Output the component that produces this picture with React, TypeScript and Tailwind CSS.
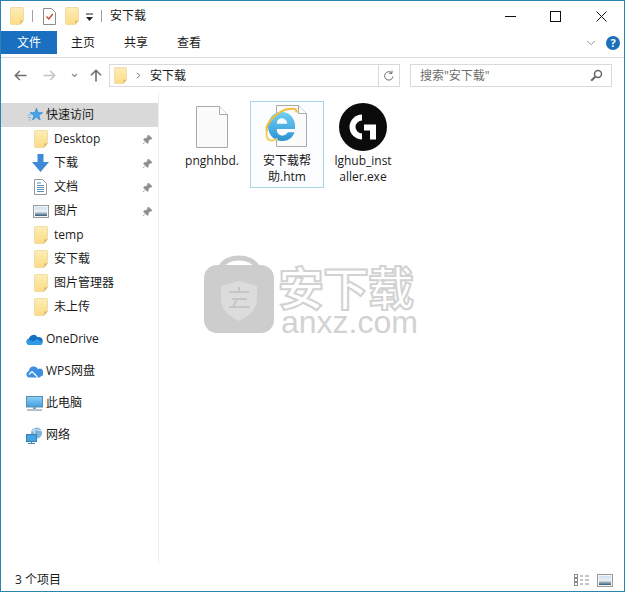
import React from "react";

const Folder = ({ w = 14, h = 18 }: { w?: number; h?: number }) => (
  <svg width={w} height={h} viewBox="0 0 14 18" className="shrink-0">
    <defs>
      <linearGradient id="fg" x1="0" y1="0" x2="0" y2="1">
        <stop offset="0" stopColor="#fcedb8" />
        <stop offset="1" stopColor="#fddc85" />
      </linearGradient>
    </defs>
    <path d="M1 .5h12l.5.5v12.500L10 17.500H1l-.5-.5V1z" fill="url(#fg)" stroke="#ecd59a" strokeWidth=".8" />
    <path d="M10.200 17.500v-4h3.300z" fill="#dcb968" />
  </svg>
);

const Pin = () => (
  <svg width="11" height="11" viewBox="0 0 11 11" className="shrink-0">
    <path d="M6.500 1 10 4.500 9 5.200 8.200 5 6.200 7l.1 1.600-.8.8-4-4 .8-.8L3.900 4.700l2-2-.2-.8zM3.200 7.600.8 10.200" fill="#8c8c8c" stroke="#8c8c8c" strokeWidth=".7" />
  </svg>
);

const StarIcon = () => (
  <svg width="16" height="16" viewBox="0 0 16 16">
    <path d="M9.500 1.200 11 5.600l4.600.1-3.700 2.800 1.300 4.500-3.800-2.700-3.900 2.700 1.400-4.500L3 5.700l4.700-.1z" fill="#45a4ea" stroke="#2f7fc4" strokeWidth=".6" />
    <path d="M.5 8h4M1 10.500h3M2 13h2" stroke="#6eb8ee" strokeWidth="1" />
  </svg>
);

const DownIcon = () => (
  <svg width="17" height="18" viewBox="0 0 17 18">
    <path d="M5.500 0h6v8H17l-8.500 10L0 8h5.500z" fill="#3d8ad8" />
  </svg>
);

const DocIcon = () => (
  <svg width="13" height="16" viewBox="0 0 13 16">
    <path d="M.5.500h8l4 4v11H.5z" fill="#fff" stroke="#9a9a9a" />
    <path d="M3 4h4M3 6.500h7M3 8.500h7M3 10.500h7M3 12.500h7" stroke="#5a8fb5" strokeWidth="1" />
  </svg>
);

const PicIcon = ({ w = 16, h = 13 }: { w?: number; h?: number }) => (
  <svg width={w} height={h} viewBox="0 0 16 13">
    <defs>
      <linearGradient id="pg" x1="0" y1="0" x2="0" y2="1">
        <stop offset="0" stopColor="#cfe2f2" />
        <stop offset=".5" stopColor="#e8eff5" />
        <stop offset="1" stopColor="#2e5a78" />
      </linearGradient>
    </defs>
    <rect x=".5" y=".5" width="15" height="12" fill="#f4f4f4" stroke="#9a9a9a" />
    <rect x="2" y="2" width="12" height="9" fill="url(#pg)" />
  </svg>
);

const OneDriveIcon = () => (
  <svg width="17" height="11" viewBox="0 0 17 11">
    <path d="M3.500 11A3.300 3.300 0 0 1 3 4.500 4.600 4.600 0 0 1 11.500 3.200 3.900 3.900 0 0 1 16.500 8 2.800 2.800 0 0 1 14 11z" fill="#1670bd" />
    <path d="M3.500 11a3 3 0 0 1-1-5.800L7 7.500l4-2.500 5.600 3.500A2.800 2.800 0 0 1 14 11z" fill="#2f9ae6" />
  </svg>
);

const WpsIcon = () => (
  <svg width="17" height="13" viewBox="0 0 17 13">
    <path d="M3.500 12.500A3.300 3.300 0 0 1 3 6a4.800 4.800 0 0 1 9-2 3.900 3.900 0 0 1 3 7.300q-.8 1.200-2 1.200z" fill="#3d8fe0" />
    <path d="M3 9.500 6 6.500l4 4 1.500 2" stroke="#fff" strokeWidth="1.200" fill="none" />
  </svg>
);

const PcIcon = () => (
  <svg width="17" height="15" viewBox="0 0 17 15">
    <defs>
      <linearGradient id="pc" x1="0" y1="0" x2="0" y2="1">
        <stop offset="0" stopColor="#8fd2f8" />
        <stop offset="1" stopColor="#3f9fe2" />
      </linearGradient>
    </defs>
    <rect x=".5" y=".5" width="16" height="10.500" fill="url(#pc)" stroke="#5a8fb0" />
    <path d="M7 11h3v2H7z" fill="#8aa0ae" />
    <path d="M1 14h15" stroke="#9aa7b0" strokeWidth="1.400" />
  </svg>
);

const NetIcon = () => (
  <svg width="17" height="17" viewBox="0 0 17 17">
    <circle cx="10.500" cy="6" r="5.500" fill="#7db4de" />
    <path d="M6 4q5-3 9 0M8 1q-1 5 3 10" stroke="#dbeaf5" fill="none" />
    <rect x=".5" y="7.500" width="10" height="7" fill="#43a3e6" stroke="#3b7fae" />
    <path d="M2 16.500h7M5.500 14.500v2" stroke="#4f88ad" />
  </svg>
);

const BlankFile = () => (
  <svg width="32" height="42" viewBox="0 0 32 42">
    <path d="M.5.500h23l8 8v33H.5z" fill="#fbfbfb" stroke="#a9a9a9" />
    <path d="M23.500.500v8h8" fill="#fff" stroke="#a9a9a9" />
  </svg>
);

const IeFile = () => (
  <svg width="44" height="44" viewBox="0 0 44 44">
    <defs>
      <linearGradient id="ie" x1="0" y1="0" x2="0" y2="1">
        <stop offset="0" stopColor="#6fd0f5" />
        <stop offset="1" stopColor="#2b93d2" />
      </linearGradient>
    </defs>
    <path d="M11.500 1.500h22l8 8v33h-30z" fill="#fbfbfb" stroke="#a9a9a9" />
    <path d="M33.500 1.500v8h8" fill="#fff" stroke="#a9a9a9" />
    <path fillRule="evenodd" d="M16.500 8a13.500 13.500 0 0 1 13.500 14.500v2.500H11.500c.2 4 2.500 6.500 6 6.500 2.500 0 4.300-1.200 5.300-3.200h6.700C27.700 34 23 37 17.300 37 9.500 37 3 31 3 22.500S9 8 16.500 8zM11.600 19.800h10.600c-.2-3.200-2.300-5.500-5.300-5.500s-5 2.300-5.300 5.500z" fill="url(#ie)" />
    <path d="M2 27C-1 20 14 6 24 5c5-.6 8-.5 7.500 3.500" stroke="#f2bd3a" strokeWidth="2.200" fill="none" />
    <path d="M2 26.500c-1.500 6 .5 10 4.500 10 2.500 0 4.500-1 6-2" stroke="#f4cf5a" strokeWidth="2" fill="none" />
  </svg>
);

const GLogo = () => (
  <svg width="48" height="48" viewBox="0 0 48 48">
    <circle cx="24" cy="24" r="24" fill="#0b0b0b" />
    <path d="M23 11.500a12.500 12.500 0 0 0 0 25v-6a6.500 6.500 0 0 1 0-13z" fill="#fff" />
    <path d="M25 21.500h12v15h-6v-9h-6z" fill="#fff" />
  </svg>
);

const SmallFolder = () => <Folder w={14} h={18} />;

const navTop: [React.ReactNode, string, boolean][] = [
  [<SmallFolder />, "Desktop", true],
  [<DownIcon />, "下载", true],
  [<DocIcon />, "文档", true],
  [<PicIcon />, "图片", true],
  [<SmallFolder />, "temp", false],
  [<SmallFolder />, "安下载", false],
  [<SmallFolder />, "图片管理器", false],
  [<SmallFolder />, "未上传", false],
];

const navBottom: [React.ReactNode, string][] = [
  [<OneDriveIcon />, "OneDrive"],
  [<WpsIcon />, "WPS网盘"],
  [<PcIcon />, "此电脑"],
  [<NetIcon />, "网络"],
];

const font = "font-['Open_Sans','Noto_Sans_CJK_SC',sans-serif]";

export default function App() {
  return (
    <div className={`relative w-[625px] h-[592px] bg-white border border-[#2a84ad] flex flex-col overflow-hidden text-[12px] text-[#1a1a1a] ${font}`}>
      {/* Title bar */}
      <div className="h-[30px] flex items-center shrink-0">
        <div className="ml-[9px] flex items-center">
          <Folder />
          <div className="ml-[8px] w-px h-[12px] bg-[#a0a0a0]" />
          <div className="ml-[10px]">
            <svg width="13" height="17" viewBox="0 0 13 17">
              <path d="M.5.500h8l4 4v12H.5z" fill="#fff" stroke="#8c8c8c" />
              <path d="M3.500 8.500 5.800 11l4-5" stroke="#c8432c" strokeWidth="1.300" fill="none" />
            </svg>
          </div>
          <div className="ml-[9px]"><Folder /></div>
          <svg width="9" height="9" viewBox="0 0 9 9" className="ml-[6px] mt-[2px]">
            <path d="M1 1h7" stroke="#222" />
            <path d="M1 4h7L4.500 8z" fill="#222" />
          </svg>
          <div className="ml-[7px] w-px h-[12px] bg-[#a0a0a0]" />
          <span className="ml-[8px] text-[12px]">安下载</span>
        </div>
        <div className="ml-auto flex items-center">
          <svg width="11" height="11" viewBox="0 0 11 11" className="mr-[34px]"><path d="M0 5.500h11" stroke="#111" /></svg>
          <svg width="11" height="11" viewBox="0 0 11 11" className="mr-[35px]"><rect x=".5" y=".5" width="10" height="10" fill="none" stroke="#111" /></svg>
          <svg width="11" height="11" viewBox="0 0 11 11" className="mr-[17px]"><path d="M.5.500l10 10M10.500.500l-10 10" stroke="#111" /></svg>
        </div>
      </div>

      {/* Ribbon tabs */}
      <div className="h-[27px] flex items-start shrink-0 border-b border-[#dadbdc]">
        <div className="w-[56px] h-[23px] bg-[#1a6fc0] text-white flex items-center justify-center">文件</div>
        <div className="w-[52px] h-[23px] flex items-center justify-center">主页</div>
        <div className="w-[54px] h-[23px] flex items-center justify-center">共享</div>
        <div className="w-[52px] h-[23px] flex items-center justify-center">查看</div>
        <div className="ml-auto flex items-center h-[23px] pr-[4px] gap-[10px]">
          <svg width="10" height="6" viewBox="0 0 10 6"><path d="M1 .8l4 4 4-4" stroke="#9a9a9a" fill="none" /></svg>
          <div className="w-[14px] h-[14px] rounded-full bg-[#1a6fb8] text-white flex items-center justify-center text-[11px] font-bold leading-none">?</div>
        </div>
      </div>

      {/* Address row */}
      <div className="h-[35px] flex items-center shrink-0">
        <svg width="13" height="11" viewBox="0 0 13 11" className="ml-[13px]"><path d="M12.500 5.500H1.500M5.800 1 1.300 5.500 5.800 10" stroke="#6e6e6e" strokeWidth="1.500" fill="none" /></svg>
        <svg width="13" height="11" viewBox="0 0 13 11" className="ml-[16px]"><path d="M.5 5.500h11M7.200 1l4.500 4.500L7.200 10" stroke="#c4c4c4" strokeWidth="1.500" fill="none" /></svg>
        <svg width="7" height="5" viewBox="0 0 7 5" className="ml-[15px]"><path d="M1 1l2.500 2.500L6 1" stroke="#8a8a8a" fill="none" strokeWidth="1.200" /></svg>
        <svg width="12" height="13" viewBox="0 0 12 13" className="ml-[12px]"><path d="M6 12.500V1.500M1 6.300l5-5 5 5" stroke="#6e6e6e" strokeWidth="1.600" fill="none" /></svg>
        <div className="ml-[7px] w-[291px] h-[23px] border border-[#d9d9d9] flex items-center">
          <div className="ml-[4px] flex"><Folder w={13} h={17} /></div>
          <svg width="5" height="7" viewBox="0 0 5 7" className="ml-[9px]"><path d="M1 .8l2.700 2.700L1 6.200" stroke="#6a6a6a" fill="none" /></svg>
          <span className="ml-[9px]">安下载</span>
          <div className="ml-auto w-px h-full bg-[#d9d9d9]" />
          <svg width="12" height="12" viewBox="0 0 12 12" className="mx-[4px]"><path d="M10 6.500A4.200 4.200 0 1 1 8.700 2.800M9 .6v2.800H6.200" stroke="#6a6a6a" fill="none" /></svg>
        </div>
        <div className="ml-[10px] w-[202px] h-[23px] border border-[#d9d9d9] flex items-center pl-[9px] pr-[8px] text-[#6d6d6d]">
          <span>搜索"安下载"</span>
          <svg width="13" height="13" viewBox="0 0 13 13" className="ml-auto"><circle cx="8" cy="5" r="3.500" fill="none" stroke="#666" strokeWidth="1.500" /><path d="M5.500 7.500 1.200 11.800" stroke="#666" strokeWidth="2" /></svg>
        </div>
      </div>

      {/* Main */}
      <div className="flex-1 flex min-h-0">
        <div className="w-[158px] border-r border-[#eeeeee] shrink-0 flex flex-col pt-[10px]">
          <div className="h-[24px] bg-[#d9d9d9] flex items-center pl-[26px] gap-[3px]">
            <StarIcon />
            <span>快速访问</span>
          </div>
          {navTop.map(([icon, label, pinned], i) => (
            <div key={i} className="h-[24px] flex items-center">
              <div className="w-[53px] flex justify-center pl-[26px] shrink-0">{icon}</div>
              <span className="flex-1">{label}</span>
              {pinned && <div className="mr-[5px] flex"><Pin /></div>}
            </div>
          ))}
          <div className="h-[8px]" />
          {navBottom.map(([icon, label], i) => (
            <div key={i} className="h-[24px] mb-[8px] flex items-center">
              <div className="w-[45px] flex justify-center pl-[21px] shrink-0">{icon}</div>
              <span>{label}</span>
            </div>
          ))}
        </div>

        <div className="flex-1 flex items-start pt-[8px] pl-[16px]">
          <div className="w-[74px] h-[86px] flex flex-col items-center border border-transparent">
            <div className="mt-[4px] h-[43px]"><BlankFile /></div>
            <div className="mt-[4px] text-center leading-[16px]">pnghhbd.</div>
          </div>
          <div className="ml-[1px] w-[74px] h-[87px] flex flex-col items-center border border-[#a9d6e6] bg-[#fbfdfe]">
            <div className="mt-[2px] h-[45px]"><IeFile /></div>
            <div className="mt-[4px] text-center leading-[16px] w-[52px] break-all">安下载帮助.htm</div>
          </div>
          <div className="ml-[2px] w-[74px] h-[86px] flex flex-col items-center">
            <div className="mt-[2px] h-[48px]"><GLogo /></div>
            <div className="mt-[2px] text-center leading-[16px] w-[62px] break-all">lghub_installer.exe</div>
          </div>
        </div>
      </div>

      {/* Status bar */}
      <div className="h-[28px] shrink-0 flex items-center pl-[14px] pr-[11px] pt-[6px]">
        <span>3 个项目</span>
        <div className="ml-auto flex items-center gap-[7px]">
          <svg width="16" height="13" viewBox="0 0 16 13">
            <rect x=".5" y=".5" width="3" height="3" fill="none" stroke="#8a8a8a" />
            <rect x=".5" y="4.500" width="3" height="3" fill="none" stroke="#8a8a8a" />
            <rect x=".5" y="8.500" width="3" height="3" fill="none" stroke="#8a8a8a" />
            <path d="M6 2h3M11 2h4M6 6h3M11 6h4M6 10h3M11 10h4" stroke="#8a8a8a" />
          </svg>
          <PicIcon w={16} h={13} />
        </div>
      </div>

      {/* Watermark */}
      <div className="absolute left-[203px] top-[250px] flex items-start pointer-events-none">
        <svg width="70" height="82" viewBox="0 0 70 82">
          <path d="M17 16C22 4 48 4 53 16" stroke="#cdcdcd" strokeWidth="5" fill="none" />
          <rect x="0" y="14" width="70" height="68" rx="13" fill="#cdcdcd" />
          <path d="M35 30l18 5v15q-2 13-18 20-16-7-18-20V35z" fill="#dcdcdc" />
          <path d="M25 41h20M35 36v5M28 48h15M33 48l-4 8M25 56h21" stroke="#c6c6c6" strokeWidth="2" fill="none" />
        </svg>
        <div className="ml-[4px] flex flex-col items-start">
          <div className="h-[46px] mt-[13px] leading-[46px] text-[46px] font-bold tracking-[-1px] text-white [-webkit-text-stroke:2px_#d2d2d2]">安下载</div>
          <div className="text-[32px] leading-[24px] ml-[3px] text-[#d2d2d2] font-['Liberation_Sans',sans-serif]">anxz.com</div>
        </div>
      </div>
    </div>
  );
}
